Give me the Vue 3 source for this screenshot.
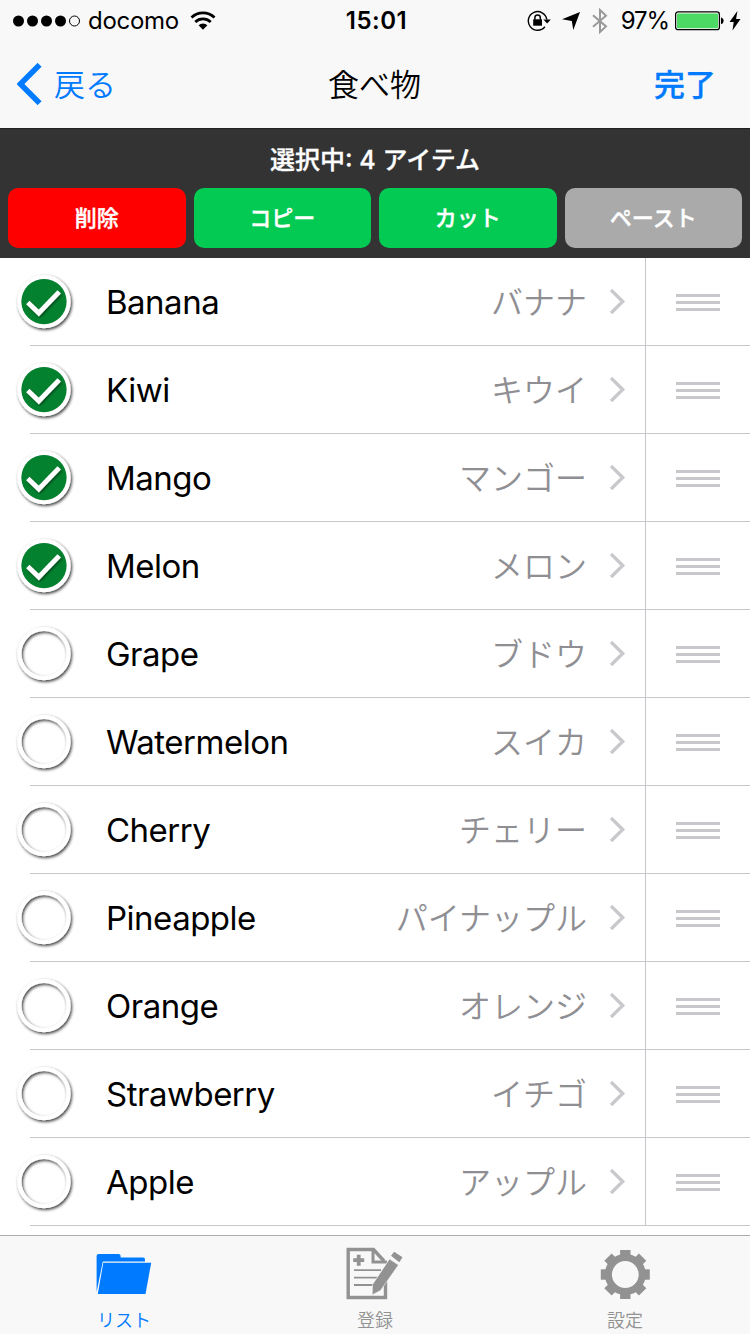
<template>
  <div class="screen">
    <header class="top">
      <div class="status-bar">
        <div class="status-left">
          <svg class="signal" viewBox="0 0 68 12">
            <circle v-for="n in 4" :key="n" :cx="5.5 + (n - 1) * 14" cy="6" r="5.5" />
            <circle cx="61.5" cy="6" r="5" fill="none" stroke="#000" stroke-width="1" />
          </svg>
          <span class="carrier">docomo</span>
          <svg class="wifi" viewBox="0 0 26 20">
            <path d="M1.5 6.6a16.5 16.5 0 0 1 23 0" fill="none" stroke="#000" stroke-width="2.8" />
            <path d="M5.3 11a11.2 11.2 0 0 1 15.4 0" fill="none" stroke="#000" stroke-width="2.8" />
            <path d="M8.6 14.2a6.6 6.6 0 0 1 8.8 0L13 18.8z" />
          </svg>
        </div>
        <div class="clock">15:01</div>
        <div class="status-right">
          <svg class="lock" viewBox="0 0 24 22">
            <path d="M19.8 9.5a9.3 9.3 0 1 0-1.9 7.2" fill="none" stroke="#000" stroke-width="1.4" />
            <path d="M16.4 9.5h7.4l-3.700 4z" />
            <path d="M6.200 9.300h8.800v6.400H6.200z" />
            <path d="M7.900 9.800V7.600a2.700 2.700 0 0 1 5.400 0v2.200" fill="none" stroke="#000" stroke-width="1.500" />
          </svg>
          <svg class="location" viewBox="0 0 18 18">
            <path d="M18 0 11.300 18 9.800 9 0 7.200z" />
          </svg>
          <svg class="bluetooth" viewBox="0 0 16 26">
            <path d="M1 7.200 14 18.400 8 24V2l6 5.800L1 18.800" fill="none" stroke="#999" stroke-width="2" />
          </svg>
          <span class="percent">97%</span>
          <svg class="battery" viewBox="0 0 49 20">
            <rect x=".6" y=".9" width="43.800" height="17.800" rx="2.500" fill="#fff" stroke="#000" stroke-width="1.300" />
            <rect x="2" y="2.400" width="41" height="14.800" rx="1" fill="#4cd964" />
            <path d="M46 6.500c3.500.5 3.500 6.100 0 6.600z" />
          </svg>
          <svg class="bolt" viewBox="0 0 12 20">
            <path d="M8.400 0 .5 11h4.200L3.500 19.500 11.500 8H7.100z" />
          </svg>
        </div>
      </div>
      <nav class="nav-bar">
        <button class="back">
          <svg viewBox="0 0 25 42"><path d="M22.600 1.800 3.400 21l19.200 19.200" fill="none" stroke="#007aff" stroke-width="5.600" /></svg>
          <span>戻る</span>
        </button>
        <h1>食べ物</h1>
        <button class="done">完了</button>
      </nav>
    </header>

    <section class="toolbar">
      <p>選択中: {{ selectedCount }} アイテム</p>
      <div class="actions">
        <button v-for="action in actions" :key="action.label" :class="action.type">{{ action.label }}</button>
      </div>
    </section>

    <ul class="list">
      <li v-for="item in items" :key="item.name" class="row">
        <div class="check" @click="item.selected = !item.selected">
          <svg viewBox="0 0 64 64">
            <defs>
              <filter id="ring-shadow" x="-20%" y="-20%" width="140%" height="140%">
                <feDropShadow dx="1.200" dy="1.600" stdDeviation="1.800" flood-color="#000" flood-opacity=".8" />
              </filter>
              <filter id="tick-shadow" x="-20%" y="-20%" width="140%" height="140%">
                <feDropShadow dx="1" dy="1.500" stdDeviation="1.200" flood-color="#000" flood-opacity=".5" />
              </filter>
            </defs>
            <circle cx="32" cy="31.600" r="24.600" fill="none" stroke="#fff" stroke-width="4.200" filter="url(#ring-shadow)" />
            <circle v-if="item.selected" cx="32" cy="31.600" r="22.600" fill="#04812f" />
            <path v-if="item.selected" d="m15.800 32.400 11 10.600L47.200 21.800" fill="none" stroke="#fff" stroke-width="4.800" filter="url(#tick-shadow)" />
          </svg>
        </div>
        <span class="name">{{ item.name }}</span>
        <span class="detail">{{ item.kana }}</span>
        <svg class="chevron" viewBox="0 0 16 26"><path d="m1 1 11.700 11.500L1 24" fill="none" stroke="#c7c7cc" stroke-width="3.300" /></svg>
        <div class="handle"><i></i><i></i><i></i></div>
      </li>
    </ul>

    <footer class="tab-bar">
      <button class="tab active">
        <svg viewBox="0 0 60 60">
          <path d="M2.600 49V13q0-2 2-2h20q2 0 2 2v1.500H49q2 0 2 2V18.500H8.800z" />
          <path d="M9.300 19.800H57.200L51.500 51H3.800z" />
        </svg>
        <span>リスト</span>
      </button>
      <button class="tab">
        <svg viewBox="0 0 60 60">
          <path d="M40.500 36v18.500H3.200V6.500H28.500L39 18" fill="none" stroke="#929292" stroke-width="3.400" />
          <path d="M28 6v13H42" fill="none" stroke="#929292" stroke-width="3" />
          <path d="M8.200 17.200h11M13.700 11.700v11" fill="none" stroke="#929292" stroke-width="3.800" />
          <path d="M9 27.200h27M9 34.600h23M9 42h19" fill="none" stroke="#929292" stroke-width="1.800" />
          <path d="m44.500 16 9 6-18 25.500-8.300 4.400.3-10.400z" stroke="#f8f8f8" stroke-width=".6" />
          <path d="m46 12.800 3.200-4 8.300 5.400-3.200 5z" />
        </svg>
        <span>登録</span>
      </button>
      <button class="tab">
        <svg viewBox="0 0 60 60">
          <g transform="translate(30.300 31.500)">
            <path v-for="n in 8" :key="n" d="M-5.200-16v-8.500h10.400v8.500z" :transform="`rotate(${n * 45})`" />
            <circle r="16.900" fill="none" stroke="#929292" stroke-width="7" />
          </g>
        </svg>
        <span>設定</span>
      </button>
    </footer>
  </div>
</template>

<script setup>
import { ref, computed } from 'vue'

const actions = [
  { label: '削除', type: 'delete' },
  { label: 'コピー', type: 'copy' },
  { label: 'カット', type: 'cut' },
  { label: 'ペースト', type: 'paste' }
]

const items = ref([
  { name: 'Banana', kana: 'バナナ', selected: true },
  { name: 'Kiwi', kana: 'キウイ', selected: true },
  { name: 'Mango', kana: 'マンゴー', selected: true },
  { name: 'Melon', kana: 'メロン', selected: true },
  { name: 'Grape', kana: 'ブドウ', selected: false },
  { name: 'Watermelon', kana: 'スイカ', selected: false },
  { name: 'Cherry', kana: 'チェリー', selected: false },
  { name: 'Pineapple', kana: 'パイナップル', selected: false },
  { name: 'Orange', kana: 'オレンジ', selected: false },
  { name: 'Strawberry', kana: 'イチゴ', selected: false },
  { name: 'Apple', kana: 'アップル', selected: false }
])

const selectedCount = computed(() => items.value.filter((i) => i.selected).length)
</script>

<style>
body {
  margin: 0;
}
</style>

<style scoped>
.screen {
  width: 750px;
  height: 1334px;
  display: flex;
  flex-direction: column;
  overflow: hidden;
  background: #fff;
  color: #000;
  font-family: Inter, "Noto Sans CJK JP", sans-serif;
}

button {
  border: 0;
  padding: 0;
  background: none;
  font-family: inherit;
  cursor: pointer;
}

svg {
  display: block;
  flex-shrink: 0;
}

.top {
  height: 128px;
  box-sizing: border-box;
  background: #f8f8f8;
}

.status-bar {
  height: 41px;
  display: grid;
  grid-template-columns: minmax(0, 1fr) auto minmax(0, 1fr);
  align-items: center;
  padding: 0 10px 0 13px;
}

.status-left,
.status-right {
  display: flex;
  align-items: center;
}

.status-right {
  justify-content: flex-end;
}

.signal {
  width: 68px;
  height: 12px;
}

.carrier {
  margin-left: 7px;
  font-size: 24px;
  line-height: 41px;
  letter-spacing: -0.3px;
}

.wifi {
  width: 26px;
  height: 20px;
  margin-left: 11px;
}

.clock {
  font-size: 24px;
  font-weight: 600;
  letter-spacing: 0.5px;
}

.lock {
  width: 24px;
  height: 22px;
}

.location {
  width: 18px;
  height: 18px;
  margin-left: 11px;
}

.bluetooth {
  width: 16px;
  height: 26px;
  margin-left: 12px;
}

.percent {
  margin-left: 13px;
  font-size: 24px;
  letter-spacing: -1.1px;
}

.battery {
  width: 49px;
  height: 20px;
  margin-left: 6px;
}

.bolt {
  width: 12px;
  height: 20px;
  margin: 0 -1px 0 5px;
}

.nav-bar {
  height: 86px;
  display: grid;
  grid-template-columns: minmax(0, 1fr) auto minmax(0, 1fr);
  align-items: center;
  padding: 0 18px 0 17px;
}

.back {
  display: flex;
  align-items: center;
  gap: 12px;
  color: #007aff;
  font-size: 31px;
  font-weight: 350;
}

.back svg {
  width: 25px;
  height: 42px;
}

.back span,
.nav-bar h1,
.done {
  margin: 0 0 3px;
}

.nav-bar h1 {
  font-size: 31px;
  font-weight: 350;
}

.nav-bar .done {
  justify-self: end;
  margin-right: 16px;
  color: #007aff;
  font-size: 31px;
  font-weight: 500;
  -webkit-text-stroke: 0.3px currentColor;
}

.toolbar {
  height: 130px;
  box-sizing: border-box;
  padding: 12px 8px 10px;
  border-top: 1px solid #222;
  background: #333;
}

.toolbar p {
  margin: 0;
  height: 38px;
  line-height: 39px;
  text-align: center;
  color: #fff;
  font-size: 25px;
  font-weight: 500;
  -webkit-text-stroke: 0.3px currentColor;
}

.actions {
  display: grid;
  grid-template-columns: repeat(4, 1fr);
  gap: 8px;
  margin-top: 9px;
}

.actions button {
  height: 60px;
  padding-bottom: 4px;
  border-radius: 10px;
  color: #fff;
  font-size: 22px;
  font-weight: 500;
  -webkit-text-stroke: 0.4px currentColor;
}

.actions .delete {
  background: #f00;
}

.actions .copy,
.actions .cut {
  background: #03ca53;
}

.actions .paste {
  background: #aaa;
}

.list {
  flex: 1;
  margin: 0;
  padding: 0;
  list-style: none;
}

.row {
  height: 88px;
  display: flex;
  align-items: center;
  background: linear-gradient(#c8c7cc, #c8c7cc) 30px 100% / 720px 1px no-repeat;
}

.check {
  margin: 0 30px 0 12px;
  cursor: pointer;
}

.check svg {
  width: 64px;
  height: 64px;
}

.name {
  flex: 1;
  font-size: 33px;
  letter-spacing: -0.5px;
}

.detail {
  padding-bottom: 5px;
  color: #8e8e93;
  font-size: 32px;
  font-weight: 350;
}

.chevron {
  width: 16px;
  height: 26px;
  margin: 0 19px 0 23px;
}

.handle {
  width: 105px;
  height: 88px;
  box-sizing: border-box;
  display: flex;
  flex-direction: column;
  align-items: center;
  justify-content: center;
  gap: 4px;
  padding-top: 1px;
  border-left: 1px solid #c8c7cc;
}

.handle i {
  width: 44px;
  height: 3px;
  background: #c7c7cc;
}

.tab-bar {
  height: 99px;
  box-sizing: border-box;
  display: grid;
  grid-template-columns: repeat(3, 1fr);
  border-top: 1px solid #acacac;
  background: #f8f8f8;
}

.tab {
  display: flex;
  flex-direction: column;
  align-items: center;
  padding-top: 7px;
  color: #929292;
  fill: #929292;
  font-size: 18px;
  font-weight: 350;
}

.tab svg {
  width: 60px;
  height: 60px;
}

.tab span {
  line-height: 35px;
}

.tab.active {
  padding-right: 2px;
  color: #007aff;
  fill: #007aff;
}
</style>
